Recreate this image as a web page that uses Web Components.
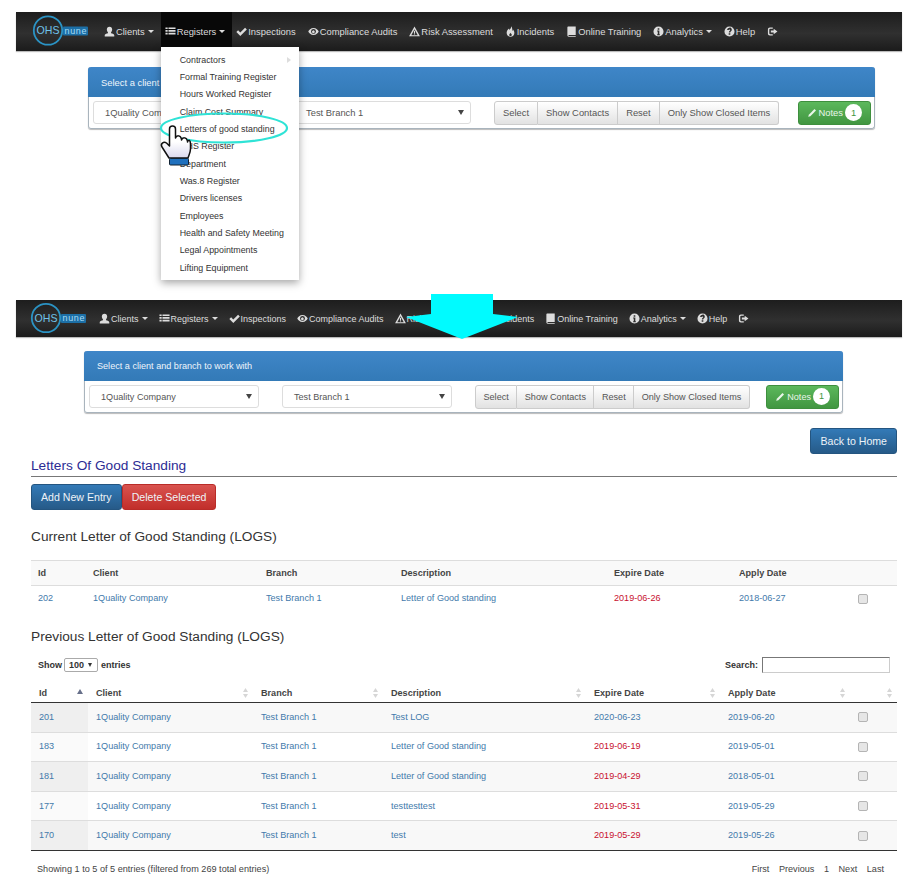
<!DOCTYPE html>
<html lang="en">
<head>
<meta charset="utf-8">
<title>Letters Of Good Standing</title>
<style>
    html, body { margin: 0; background: #fff; }
    body { font-family: "Liberation Sans", Arial, sans-serif; color: #333; }
    .page { position: relative; width: 917px; height: 886px; overflow: hidden; }
    .second { margin-top: 171px; }
</style>
</head>
<body>
<div class="page">
    <!-- first capture: the menu open -->
    <ohs-navbar brand="82" fs="9.4" pad="6">
        <ohs-nav-item icon="user" caret>Clients</ohs-nav-item>
        <ohs-nav-item icon="list" caret active>
            Registers
            <ohs-dropdown slot="menu">
                <ohs-menu-link arrow>Contractors</ohs-menu-link>
                <ohs-menu-link>Formal Training Register</ohs-menu-link>
                <ohs-menu-link>Hours Worked Register</ohs-menu-link>
                <ohs-menu-link>Claim Cost Summary</ohs-menu-link>
                <ohs-menu-link>Letters of good standing</ohs-menu-link>
                <ohs-menu-link>OHS Register</ohs-menu-link>
                <ohs-menu-link>Department</ohs-menu-link>
                <ohs-menu-link>Was.8 Register</ohs-menu-link>
                <ohs-menu-link>Drivers licenses</ohs-menu-link>
                <ohs-menu-link>Employees</ohs-menu-link>
                <ohs-menu-link>Health and Safety Meeting</ohs-menu-link>
                <ohs-menu-link>Legal Appointments</ohs-menu-link>
                <ohs-menu-link>Lifting Equipment</ohs-menu-link>
                <ohs-pointer></ohs-pointer>
            </ohs-dropdown>
        </ohs-nav-item>
        <ohs-nav-item icon="ok">Inspections</ohs-nav-item>
        <ohs-nav-item icon="eye">Compliance Audits</ohs-nav-item>
        <ohs-nav-item icon="warning">Risk Assessment</ohs-nav-item>
        <ohs-nav-item icon="fire">Incidents</ohs-nav-item>
        <ohs-nav-item icon="book">Online Training</ohs-nav-item>
        <ohs-nav-item icon="info" caret>Analytics</ohs-nav-item>
        <ohs-nav-item icon="help">Help</ohs-nav-item>
        <ohs-nav-item icon="logout"></ohs-nav-item>
    </ohs-navbar>

    <ohs-client-panel left="88" right="42" top="16" selectw="177" selectgap="24" fs="9.4" groupgap="23" btnpad="8" title="Select a client"></ohs-client-panel>

    <!-- second capture: the page it opens -->
    <ohs-navbar class="second" brand="77.5" fs="9" pad="5.5" short>
        <ohs-nav-item icon="user" caret>Clients</ohs-nav-item>
        <ohs-nav-item icon="list" caret>Registers</ohs-nav-item>
        <ohs-nav-item icon="ok">Inspections</ohs-nav-item>
        <ohs-nav-item icon="eye">Compliance Audits</ohs-nav-item>
        <ohs-nav-item icon="warning">Risk Assessment</ohs-nav-item>
        <ohs-nav-item icon="fire">Incidents</ohs-nav-item>
        <ohs-nav-item icon="book">Online Training</ohs-nav-item>
        <ohs-nav-item icon="info" caret>Analytics</ohs-nav-item>
        <ohs-nav-item icon="help">Help</ohs-nav-item>
        <ohs-nav-item icon="logout"></ohs-nav-item>
        <ohs-down-arrow slot="over"></ohs-down-arrow>
    </ohs-navbar>

    <ohs-client-panel left="84" right="74" top="14" selectw="170" selectgap="23" fs="9.1" groupgap="23" btnpad="7.5" title="Select a client and branch to work with"></ohs-client-panel>

    <ohs-logs-view></ohs-logs-view>
</div>

<script>
// Glyphicon style icons, all on a 12x12 box
const ICONS = {
    user: '<path d="M6 .8c1.900 0 2.900 1.300 2.900 3 0 1.200-.5 2.300-1.200 3v1.100c1.600.5 3.500 1 3.500 2.100v1.400H.8V9.900c0-1.100 1.900-1.600 3.500-2.100V6.800c-.7-.7-1.200-1.800-1.200-3 0-1.700 1-3 2.900-3z"/>',
    list: '<path d="M.5 1.500h2.400v1.900H.5zM3.800 1.500h7.700v1.900H3.800zM.5 4.400h2.400v1.900H.5zM3.800 4.400h7.700v1.900H3.800zM.5 7.300h2.400v1.900H.5zM3.800 7.300h7.700v1.900H3.800z"/>',
    ok: '<path d="M.4 6.500l1.900-1.900 2.400 2.400L9.900 1.800l1.900 1.900-7.100 7.100z"/>',
    eye: '<path fill-rule="evenodd" d="M6 2.200c2.900 0 4.900 2.100 5.700 3.800C10.900 7.700 8.900 9.800 6 9.800S1.100 7.700.3 6C1.100 4.300 3.100 2.200 6 2.200zM6 3.300a2.700 2.700 0 1 0 0 5.400 2.700 2.700 0 0 0 0-5.400zM6 4.500l.9.7A1.500 1.500 0 1 1 4.600 5.500z"/>',
    warning: '<path fill-rule="evenodd" d="M6 .6l5.900 10.600H.1zM6 3.600L2.500 10h7zM5.400 5.200h1.200v2.600H5.400zM5.400 8.200h1.200v1.100H5.400z"/>',
    fire: '<path d="M6.500.4c.5 2-1 2.800-1.700 4-.3-.6-.4-1-.3-1.700C3 3.800 1.800 5.300 1.800 7.300c0 2.500 1.800 4.300 4.200 4.300s4.200-1.700 4.200-4.100c0-1.600-.8-2.800-1.500-3.700 0 .8-.2 1.300-.7 1.700C8.100 3.500 7.800 1.500 6.500.4zM6 7.400c.3.900 1.400 1.200 1.400 2.300 0 .8-.6 1.300-1.400 1.300s-1.400-.5-1.400-1.300c0-1 1.200-1.300 1.400-2.300z"/>',
    book: '<path d="M2.600.5h8v9.300H3.100c-.6 0-.6 1 0 1h7.500v.8H2.900c-.9 0-1.400-.6-1.400-1.400V1.600C1.500 1 2 .5 2.600.5z"/>',
    info: '<path fill-rule="evenodd" d="M6 .5a5.500 5.500 0 1 1 0 11 5.500 5.500 0 0 1 0-11zM5.100 2.500v1.700h1.800V2.500zM4.500 5v1h.7v3h-.7v1h3V9h-.6V5z"/>',
    help: '<path fill-rule="evenodd" d="M6 .5a5.500 5.500 0 1 1 0 11 5.500 5.500 0 0 1 0-11zM6 2.300c-1.500 0-2.500.7-2.600 2.100h1.700c.1-.5.4-.7.9-.7.4 0 .8.200.8.600 0 .8-1.500 1-1.500 2.700h1.600c0-1.100 1.600-1.300 1.600-3 0-1.700-1.200-2.700-2.500-2.700zM5.100 7.900v1.700h1.800V7.900z"/>',
    logout: '<path d="M6.300 1.600v1.500H3.400c-.6 0-.9.400-.9.900v4c0 .5.300.9.900.9h2.900v1.500H3.200C1.800 10.400 1 9.400 1 8.200V3.800c0-1.200.8-2.200 2.200-2.200zM7.300 3.100L11.400 6 7.300 8.900V7.100H4.200V4.900h3.100z"/>',
    pencil: '<path d="M9 1.200l1.800 1.800-6.800 6.800-2.600.8.8-2.600z"/>'
}

const icon = (name, size = 11) => `<svg width="${size}" height="${size}" viewBox="0 0 12 12" fill="currentColor" aria-hidden="true">${ICONS[name]}</svg>`

class OhsNavbar extends HTMLElement {
    constructor() {
        super()
        this.attachShadow({ mode: 'open' })
    }

    connectedCallback() {
        const brand = this.getAttribute('brand') ?? '82'
        const fs = this.getAttribute('fs') ?? '9.4'
        const pad = this.getAttribute('pad') ?? '6'
        const short = this.hasAttribute('short')
        const cx = short ? 30 : 32
        const cy = short ? 18 : 18.5
        this.shadowRoot.innerHTML = `
            <style>
                :host {
                    --nav-pad: ${pad}px;
                    display: flex;
                    position: relative;
                    height: ${short ? 37 : 39}px;
                    margin: ${short ? 0 : 12}px 15px 0 16px;
                    background: linear-gradient(#1d1d1d, #303030 55%, #1b1b1b);
                    box-shadow: 0 1px 1px #bbb;
                    font-size: ${fs}px;
                    color: #ddd;
                }
                .brand { width: ${brand}px; flex: none; }
                svg { display: block; overflow: visible; }
                nav { display: flex; align-items: stretch; }
            </style>
            <div class="brand">
                <svg width="${brand}" height="${short ? 37 : 39}" aria-label="OHS logo">
                    <circle cx="${cx}" cy="${cy}" r="14.200" fill="none" stroke="#2b93c4" stroke-width="1.800"/>
                    <text x="${cx - 11.500}" y="${cy + 3.800}" font-family="Liberation Sans" font-size="10.600" fill="#6fc3ea">OHS</text>
                    <rect x="${cx + 15}" y="${cy - 4}" width="25" height="9" rx="1" fill="#1c6fa6"/>
                    <text x="${cx + 16.500}" y="${cy + 3.200}" font-family="Liberation Sans" font-size="9" textLength="22" fill="#a9dcf5">nune</text>
                </svg>
            </div>
            <nav><slot></slot></nav>
            <slot name="over"></slot>
        `
    }
}

class OhsNavItem extends HTMLElement {
    constructor() {
        super()
        this.attachShadow({ mode: 'open' })
    }

    connectedCallback() {
        const caret = this.hasAttribute('caret')
        this.shadowRoot.innerHTML = `
            <style>
                :host {
                    display: flex;
                    position: relative;
                    align-items: center;
                    padding: 0 var(--nav-pad);
                }
                :host([active]) {
                    margin: 0 -2px 0 1px;
                    padding: 0 7px 0 4px;
                    background: #080808;
                }
                .in { display: flex; align-items: center; gap: 1px; white-space: nowrap; }
                .caret {
                    width: 0; height: 0;
                    margin-left: 2px;
                    border: 3px solid transparent;
                    border-top-color: #ddd;
                    border-bottom: 0;
                }
                svg { flex: none; }
            </style>
            <div class="in">
                ${icon(this.getAttribute('icon'))}
                <span><slot></slot></span>
                ${caret ? '<i class="caret"></i>' : ''}
            </div>
            <slot name="menu"></slot>
        `
    }
}

// Open menu: it lies over the panel below it
class OhsDropdown extends HTMLElement {
    constructor() {
        super()
        this.attachShadow({ mode: 'open' })
        this.shadowRoot.innerHTML = `
            <style>
                :host {
                    position: absolute;
                    z-index: 5;
                    top: 35px;
                    left: 0;
                    width: 138px;
                    padding: 4px 0;
                    background: #fff;
                    box-shadow: 0 3px 8px rgba(0, 0, 0, .35);
                    font-size: 8.850px;
                    color: #333;
                }
            </style>
            <slot></slot>
        `
    }
}

class OhsMenuLink extends HTMLElement {
    constructor() {
        super()
        this.attachShadow({ mode: 'open' })
    }

    connectedCallback() {
        this.shadowRoot.innerHTML = `
            <style>
                :host {
                    display: flex;
                    justify-content: space-between;
                    align-items: center;
                    height: 17.350px;
                    padding: 0 8px 0 19px;
                    white-space: nowrap;
                }
                i { border: 3.500px solid transparent; border-left: 4px solid #ddd; border-right: 0; }
            </style>
            <slot></slot>
            ${this.hasAttribute('arrow') ? '<i></i>' : ''}
        `
    }
}

// Annotations drawn on the capture: ring round the link and the hand cursor
class OhsPointer extends HTMLElement {
    constructor() {
        super()
        this.attachShadow({ mode: 'open' })
        this.shadowRoot.innerHTML = `
            <style>
                :host { position: absolute; left: -2px; top: 59px; width: 134px; height: 62px; }
                svg { display: block; overflow: visible; }
            </style>
            <svg width="134" height="62" aria-hidden="true">
                <defs>
                    <linearGradient id="palm" x1="0" y1="0" x2="0" y2="1">
                        <stop offset=".5" stop-color="#fff"/>
                        <stop offset="1" stop-color="#d9d8ee"/>
                    </linearGradient>
                </defs>
                <ellipse cx="65" cy="22" rx="63" ry="14.500" fill="none" stroke="#2fe3d6" stroke-width="2.200"/>
                <path d="M10 52 3 41c-2-3 1.500-6 4.500-4l3 3V23c0-4 6-4 6 0v9c1-3 5-3 6 1v1c1-3 5-3 6 1v1c1-3 3-2 3 2v5c0 3-1.500 6-2.500 9z" fill="url(#palm)" stroke="#111" stroke-width="1.500" stroke-linejoin="round"/>
                <rect x="10.500" y="52.500" width="19" height="6.500" rx="1" fill="#1f70bd" stroke="#123" stroke-width="1"/>
            </svg>
        `
    }
}

// Big arrow between the two captures
class OhsDownArrow extends HTMLElement {
    constructor() {
        super()
        this.attachShadow({ mode: 'open' })
        this.shadowRoot.innerHTML = `
            <style>
                :host { position: absolute; left: 390px; top: -6px; width: 112px; height: 46px; }
            </style>
            <svg width="112" height="46" aria-hidden="true">
                <path d="M25 0h62v20l25 3-56 22L0 23l25-3z" fill="#00fbff"/>
            </svg>
        `
    }
}

class OhsClientPanel extends HTMLElement {
    constructor() {
        super()
        this.attachShadow({ mode: 'open' })
    }

    connectedCallback() {
        const get = (name, fallback) => this.getAttribute(name) ?? fallback
        const selectw = get('selectw', '171')
        const gap = get('selectgap', '23')
        this.shadowRoot.innerHTML = `
            <style>
                :host {
                    display: block;
                    margin: ${get('top', '14')}px ${get('right', '74')}px 0 ${get('left', '84')}px;
                    border: 1px solid #a9b4bd;
                    border-top: 0;
                    border-radius: 3px;
                    box-shadow: 0 1px 1px #bbb;
                    font-size: ${get('fs', '9.1')}px;
                    color: #555;
                }
                header {
                    height: 30px;
                    display: flex;
                    align-items: center;
                    padding: 0 13px;
                    margin: 0 -1px;
                    background: linear-gradient(#3f86c8, #337ab7);
                    border-radius: 3px 3px 0 0;
                    color: #eef5fb;
                    white-space: nowrap;
                }
                .body { display: flex; align-items: center; height: 31px; padding: 0 3px 0 4px; }
                .sel {
                    flex: none;
                    display: flex;
                    justify-content: space-between;
                    align-items: center;
                    box-sizing: border-box;
                    width: ${selectw}px;
                    height: 23px;
                    padding: 0 6px 0 11px;
                    border: 1px solid #ddd;
                    border-radius: 3px;
                    background: #fff;
                }
                .sel + .sel { margin-left: ${gap}px; }
                .sel i { border: 3px solid transparent; border-top: 5px solid #444; border-bottom: 0; }
                .group { display: flex; flex: none; margin-left: ${get('groupgap', '23')}px; }
                .group span {
                    display: flex;
                    align-items: center;
                    box-sizing: border-box;
                    height: 24px;
                    padding: 0 ${get('btnpad', '9')}px;
                    border: 1px solid #ccc;
                    border-left-width: 0;
                    background: linear-gradient(#fff, #e2e2e2);
                    white-space: nowrap;
                }
                .group span:first-child { border-left-width: 1px; border-radius: 3px 0 0 3px; }
                .group span:last-child { border-radius: 0 3px 3px 0; }
                .notes {
                    flex: none;
                    display: flex;
                    align-items: center;
                    gap: 2px;
                    margin-left: auto;
                    height: 24px;
                    padding: 0 8px;
                    border-radius: 3px;
                    border: 1px solid #3e8f3e;
                    box-sizing: border-box;
                    background: linear-gradient(#5cb85c, #419641);
                    color: #eaf6ea;
                    white-space: nowrap;
                }
                b {
                    min-width: 17px;
                    height: 17px;
                    border-radius: 9px;
                    background: #fff;
                    color: #419641;
                    text-align: center;
                    line-height: 17px;
                    font-weight: normal;
                }
            </style>
            <header>${get('title', '')}</header>
            <div class="body">
                <div class="sel">1Quality Company<i></i></div>
                <div class="sel">Test Branch 1<i></i></div>
                <div class="group">
                    <span>Select</span><span>Show Contacts</span><span>Reset</span><span>Only Show Closed Items</span>
                </div>
                <div class="notes">${icon('pencil', 10)}Notes<b>1</b></div>
            </div>
        `
    }
}

class OhsButton extends HTMLElement {
    constructor() {
        super()
        this.attachShadow({ mode: 'open' })
    }

    connectedCallback() {
        const red = this.getAttribute('kind') === 'danger'
        this.shadowRoot.innerHTML = `
            <style>
                :host {
                    display: inline-flex;
                    align-items: center;
                    box-sizing: border-box;
                    height: 26px;
                    padding: 0 9px;
                    border-radius: 3px;
                    border: 1px solid ${red ? '#b92c28' : '#245580'};
                    background: linear-gradient(${red ? '#d9534f, #c12e2a' : '#337ab7, #265a88'});
                    color: #eef3f8;
                    font-size: 10.600px;
                    white-space: nowrap;
                }
            </style>
            <slot></slot>
        `
    }
}

const CURRENT = [
    ['202', '1Quality Company', 'Test Branch 1', 'Letter of Good standing', '2019-06-26', '2018-06-27']
]
const PREVIOUS = [
    ['201', '1Quality Company', 'Test Branch 1', 'Test LOG', '2020-06-23', '2019-06-20'],
    ['183', '1Quality Company', 'Test Branch 1', 'Letter of Good standing', '2019-06-19', '2019-05-01'],
    ['181', '1Quality Company', 'Test Branch 1', 'Letter of Good standing', '2019-04-29', '2018-05-01'],
    ['177', '1Quality Company', 'Test Branch 1', 'testtesttest', '2019-05-31', '2019-05-29'],
    ['170', '1Quality Company', 'Test Branch 1', 'test', '2019-05-29', '2019-05-26']
]
const HEADS = ['Id', 'Client', 'Branch', 'Description', 'Expire Date', 'Apply Date', '']

const SORT_ICON = '<svg width="5" height="10" viewBox="0 0 5 10" fill="#d6d6d6" aria-hidden="true"><path d="M2.500 0 5 4H0zM0 6h5L2.500 10z"/></svg>'

class OhsLogsTable extends HTMLElement {
    constructor() {
        super()
        this.attachShadow({ mode: 'open' })
    }

    connectedCallback() {
        const sortable = this.hasAttribute('sortable')
        const widths = this.getAttribute('cols').split(',')
        const rows = sortable ? PREVIOUS : CURRENT
        const expired = (date) => date < '2020-01-01'
        const sortIcon = (i) => !sortable ? '' : (i === 0 ? '<i class="up"></i>' : SORT_ICON)

        this.shadowRoot.innerHTML = `
            <style>
                :host { display: block; font-size: 9.100px; }
                table { width: 866px; border-collapse: collapse; table-layout: fixed; }
                th, td { padding: 0 0 0 8px; text-align: left; white-space: nowrap; }
                th { color: #444; }
                td { color: #437aab; border-top: 1px solid #ddd; }
                .current th:first-child, .current td:first-child { padding-left: 7px; }
                .current th { height: 24px; background: #f9f9f9; border-top: 1px solid #ddd; border-bottom: 1px solid #ddd; }
                .current td { height: 24px; border-top: 0; }
                .sortable th { height: 19px; border-bottom: 1px solid #333; }
                .sortable td { height: 27.600px; padding-bottom: 1px; }
                .sortable tbody tr:nth-child(odd) td { background: #f8f8f8; }
                .sortable tbody tr:nth-child(odd) td:first-child { background: #efefef; }
                .sortable tbody tr:nth-child(even) td:first-child { background: #fafafa; }
                .sortable tbody tr:first-child td { border-top: 0; }
                .sortable tbody tr:last-child td { border-bottom: 1px solid #333; }
                .red { color: #c8102e; }
                .cell { display: flex; justify-content: space-between; align-items: center; padding-right: 5.500px; }
                .up { display: block; width: 0; border: 3px solid transparent; border-bottom: 5px solid #67708a; border-top: 0; margin-top: -3px; }
                .box { display: block; box-sizing: border-box; width: 10px; height: 10px; margin-top: 1px; border: 1px solid #b4b4b4; border-radius: 2px; background: #e6e6e6; }
            </style>
            <table class="${sortable ? 'sortable' : 'current'}">
                <colgroup>${widths.map((w) => `<col style="width:${w}px">`).join('')}</colgroup>
                <thead>
                    <tr>${HEADS.map((h, i) => `<th><div class="cell"><span>${h}</span>${sortIcon(i)}</div></th>`).join('')}</tr>
                </thead>
                <tbody>
                    ${rows.map((r) => `
                        <tr>
                            ${r.map((c, i) => `<td class="${i === 4 && expired(c) ? 'red' : ''}">${c}</td>`).join('')}
                            <td><span class="box"></span></td>
                        </tr>`).join('')}
                </tbody>
            </table>
        `
    }
}

// Everything under the second panel
class OhsLogsView extends HTMLElement {
    constructor() {
        super()
        this.attachShadow({ mode: 'open' })
        this.shadowRoot.innerHTML = `
            <style>
                :host { display: block; margin: 15px 20px 0 31px; }
                .back { display: flex; justify-content: flex-end; }
                h2 {
                    margin: 2px 0 7px;
                    height: 20px;
                    border-bottom: 1px solid #777;
                    font-size: 13.700px;
                    font-weight: normal;
                    line-height: 19px;
                    color: #2c2c94;
                }
                .actions { display: flex; }
                h3 { margin: 17px 0 13px; font-size: 13.700px; font-weight: normal; line-height: 20px; color: #333; }
                h3.prev { margin: 17px 0 10px; }
                .tools {
                    display: flex;
                    justify-content: space-between;
                    align-items: center;
                    height: 16px;
                    margin-bottom: 10px;
                    padding: 0 7px;
                    font-size: 9px;
                    font-weight: bold;
                }
                .tools div { display: flex; align-items: center; }
                .len { display: flex; align-items: center; gap: 4px; box-sizing: border-box; width: 34px; height: 14px; margin: 0 3px 0 2px; padding: 0 4px; border: 1px solid #aaa; border-radius: 2px; }
                .len i { border: 2.500px solid transparent; border-top: 4px solid #333; border-bottom: 0; }
                input { box-sizing: border-box; width: 128px; height: 16px; margin-left: 4px; padding: 0; border: 1px solid #ccc; border-top-color: #777; border-left-color: #777; }
                footer { display: flex; justify-content: space-between; margin-top: 13px; padding: 0 13px 0 6px; font-size: 9.150px; color: #444; }
                nav { display: flex; gap: 9.500px; }
            </style>
            <div class="back"><ohs-button>Back to Home</ohs-button></div>
            <h2>Letters Of Good Standing</h2>
            <div class="actions">
                <ohs-button>Add New Entry</ohs-button>
                <ohs-button kind="danger">Delete Selected</ohs-button>
            </div>
            <h3>Current Letter of Good Standing (LOGS)</h3>
            <ohs-logs-table cols="54,173,135,213,125,119,47"></ohs-logs-table>
            <h3 class="prev">Previous Letter of Good Standing (LOGS)</h3>
            <div class="tools">
                <div>Show <span class="len">100<i></i></span> entries</div>
                <div>Search: <input type="text" aria-label="Search"></div>
            </div>
            <ohs-logs-table sortable cols="57,165,130,203,134,130,47"></ohs-logs-table>
            <footer>
                <span>Showing 1 to 5 of 5 entries (filtered from 269 total entries)</span>
                <nav><span>First</span><span>Previous</span><span>1</span><span>Next</span><span>Last</span></nav>
            </footer>
        `
    }
}

customElements.define('ohs-navbar', OhsNavbar)
customElements.define('ohs-nav-item', OhsNavItem)
customElements.define('ohs-dropdown', OhsDropdown)
customElements.define('ohs-menu-link', OhsMenuLink)
customElements.define('ohs-pointer', OhsPointer)
customElements.define('ohs-down-arrow', OhsDownArrow)
customElements.define('ohs-client-panel', OhsClientPanel)
customElements.define('ohs-button', OhsButton)
customElements.define('ohs-logs-table', OhsLogsTable)
customElements.define('ohs-logs-view', OhsLogsView)
</script>
</body>
</html>
